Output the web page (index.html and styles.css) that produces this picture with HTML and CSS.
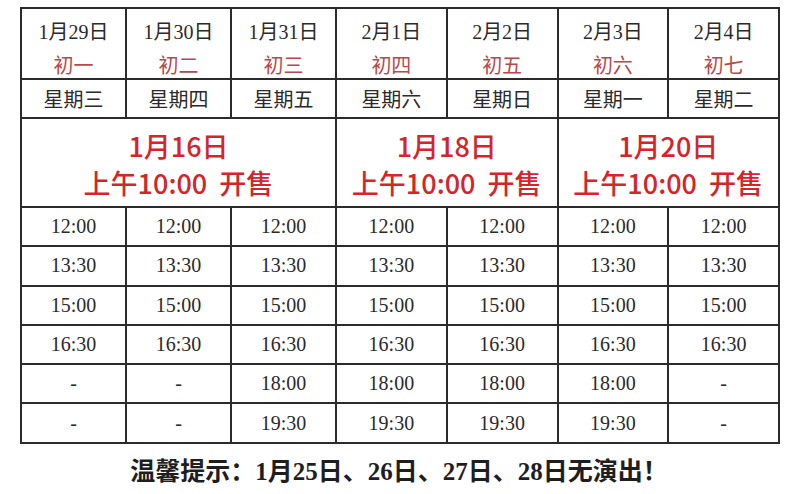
FILE: index.html
```html
<!DOCTYPE html>
<html lang="zh">
<head>
<meta charset="utf-8">
<title>演出时间表</title>
<link rel="stylesheet" href="styles.css">
</head>
<body>
<div class="page">
  <table class="schedule">
    <colgroup>
      <col class="c-narrow"><col class="c-narrow"><col class="c-narrow">
      <col class="c-wide"><col class="c-wide"><col class="c-wide"><col class="c-wide">
    </colgroup>
    <tr class="r-date">
      <td><div class="date">1月29日</div><div class="lunar">初一</div></td>
      <td><div class="date">1月30日</div><div class="lunar">初二</div></td>
      <td><div class="date">1月31日</div><div class="lunar">初三</div></td>
      <td><div class="date">2月1日</div><div class="lunar">初四</div></td>
      <td><div class="date">2月2日</div><div class="lunar">初五</div></td>
      <td><div class="date">2月3日</div><div class="lunar">初六</div></td>
      <td><div class="date">2月4日</div><div class="lunar">初七</div></td>
    </tr>
    <tr class="r-week">
      <td>星期三</td><td>星期四</td><td>星期五</td><td>星期六</td><td>星期日</td><td>星期一</td><td>星期二</td>
    </tr>
    <tr class="r-sale">
      <td colspan="3"><div class="sale">1月16日</div><div class="sale">上午10:00&nbsp;&nbsp;开售</div></td>
      <td colspan="2"><div class="sale">1月18日</div><div class="sale">上午10:00&nbsp;&nbsp;开售</div></td>
      <td colspan="2"><div class="sale">1月20日</div><div class="sale">上午10:00&nbsp;&nbsp;开售</div></td>
    </tr>
    <tr class="r-time"><td>12:00</td><td>12:00</td><td>12:00</td><td>12:00</td><td>12:00</td><td>12:00</td><td>12:00</td></tr>
    <tr class="r-time"><td>13:30</td><td>13:30</td><td>13:30</td><td>13:30</td><td>13:30</td><td>13:30</td><td>13:30</td></tr>
    <tr class="r-time"><td>15:00</td><td>15:00</td><td>15:00</td><td>15:00</td><td>15:00</td><td>15:00</td><td>15:00</td></tr>
    <tr class="r-time"><td>16:30</td><td>16:30</td><td>16:30</td><td>16:30</td><td>16:30</td><td>16:30</td><td>16:30</td></tr>
    <tr class="r-time"><td>-</td><td>-</td><td>18:00</td><td>18:00</td><td>18:00</td><td>18:00</td><td>-</td></tr>
    <tr class="r-time"><td>-</td><td>-</td><td>19:30</td><td>19:30</td><td>19:30</td><td>19:30</td><td>-</td></tr>
  </table>
  <p class="note">温馨提示：1月25日、26日、27日、28日无演出！</p>
</div>
</body>
</html>
```

FILE: styles.css
```css
html, body {
  margin: 0;
  padding: 0;
  background: #ffffff;
}

.page {
  padding: 7px 0 0 20px;
}

.schedule {
  border-collapse: collapse;
  table-layout: fixed;
  width: 758px;
}

.c-narrow { width: 105px; }
.c-wide { width: 110.75px; }

.schedule td {
  border: 2px solid #2b2b2b;
  padding: 0;
  text-align: center;
  vertical-align: middle;
  color: #262626;
}

.r-date td {
  height: 56px;
  padding-top: 13px;
  vertical-align: top;
}

.date {
  font-family: "Liberation Serif", "Noto Sans CJK SC", serif;
  font-size: 20px;
  line-height: 20px;
  color: #2a2a2a;
}

.lunar {
  margin-top: 13px;
  font-family: "Noto Sans CJK SC", sans-serif;
  font-size: 20px;
  line-height: 20px;
  color: #b9474b;
}

.r-week td {
  height: 37px;
  font-family: "Noto Sans CJK SC", sans-serif;
  font-size: 20px;
  color: #2a2a2a;
}

.r-sale td {
  height: 84px;
  padding-top: 3px;
}

.sale {
  font-family: "Noto Sans CJK SC", sans-serif;
  font-size: 27px;
  font-weight: 500;
  line-height: 37px;
  color: #d2262b;
}

.r-time td {
  height: 37.3px;
  font-family: "Liberation Serif", serif;
  font-size: 20px;
  color: #2a2a2a;
}

.note {
  margin: 13px 0 0 0;
  width: 758px;
  text-align: center;
  font-family: "Liberation Serif", "Noto Sans CJK SC", serif;
  font-weight: bold;
  font-size: 25px;
  line-height: 30px;
  color: #1e1e1e;
}
```
